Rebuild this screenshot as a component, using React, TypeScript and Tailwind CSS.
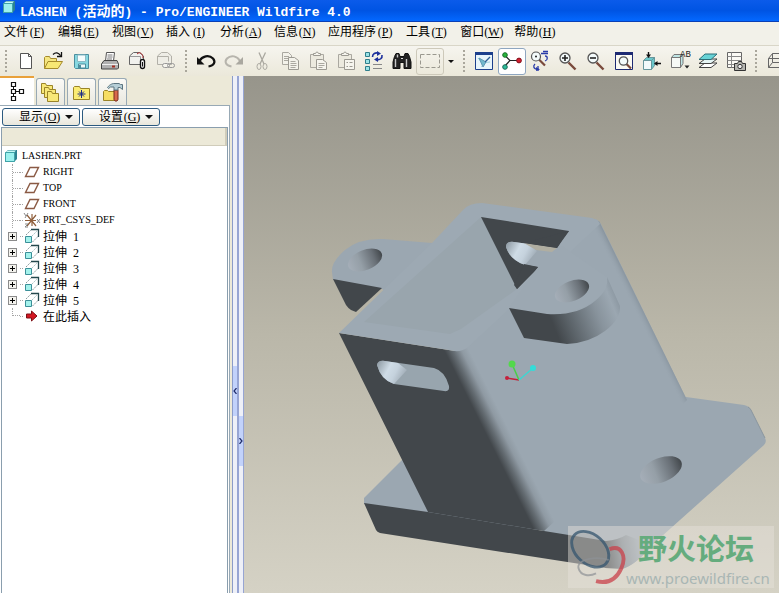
import { ReactNode } from "react";

type Tool = {
  label: string;
  icon: ReactNode;
  boxed?: "active" | "flat";
};

type MenuEntry = {
  label: string;
  hotkey: string;
};

const menus: MenuEntry[] = [
  { label: "文件", hotkey: "F" },
  { label: "编辑", hotkey: "E" },
  { label: "视图", hotkey: "V" },
  { label: "插入", hotkey: "I" },
  { label: "分析", hotkey: "A" },
  { label: "信息", hotkey: "N" },
  { label: "应用程序", hotkey: "P" },
  { label: "工具", hotkey: "T" },
  { label: "窗口", hotkey: "W" },
  { label: "帮助", hotkey: "H" },
];

const Icon = ({ children }: { children: ReactNode }) => (
  <svg
    viewBox="0 0 22 22"
    className="h-[22px] w-[22px] shrink-0"
    fill="none"
    stroke="#444"
    strokeWidth="1"
    aria-hidden="true"
  >
    {children}
  </svg>
);

const Lens = ({ children }: { children?: ReactNode }) => (
  <>
    <path d="M11.5 12.5 18.5 19.5" stroke="#7a4a3c" strokeWidth="2.4" />
    <circle cx="8" cy="8" r="5" fill="#f4fbfb" stroke="#555" strokeWidth="1.3" />
    {children}
  </>
);

/* ---------- toolbar groups ---------- */

const fileTools: Tool[] = [
  {
    label: "新建",
    icon: (
      <Icon>
        <path d="M5.5 3.5h8l3 3v12h-11z" fill="#fff" stroke="#555" />
        <path d="M13.5 3.5v3h3" stroke="#555" />
      </Icon>
    ),
  },
  {
    label: "打开",
    icon: (
      <Icon>
        <path d="M1.5 18.5v-11l1-1h4l1 2h6v4" fill="#f5e680" stroke="#a58a2c" />
        <path d="M1.5 18.5 5 11.5h14.5L15 18.5z" fill="#f7e774" stroke="#a58a2c" />
        <path d="M10 4.5c2.500-2.500 5.500-2 7.500 1M18.500 2v4.500H14" stroke="#111" strokeWidth="1.3" />
      </Icon>
    ),
  },
  {
    label: "保存",
    icon: (
      <Icon>
        <path d="M3.500 4.500h14v14h-13l-1-1z" fill="#86d8e0" stroke="#4b8e9e" />
        <path d="M6.500 5v6.500h8V5z" fill="#f5fdfd" stroke="#8bb9c4" />
        <path d="M7.500 18v-4h7v4z" fill="#eefafa" stroke="#4b8e9e" />
        <path d="M9 15v3" stroke="#4b8e9e" strokeWidth="2" />
      </Icon>
    ),
  },
  {
    label: "打印",
    icon: (
      <Icon>
        <path d="M6.500 11 7.500 2.500h8l-1 8.500z" fill="#fff" stroke="#555" />
        <path d="M8.500 5h5M8.500 7h5M8 9h5" stroke="#777" />
        <path d="M2.500 14 5 10.500h13l1.500 3.500v4l-1 1h-16z" fill="#b0b0b0" stroke="#444" />
        <path d="M3 14.500h16" stroke="#eee" />
        <path d="M13 16.500h3" stroke="#a22c20" strokeWidth="2" />
      </Icon>
    ),
  },
  {
    label: "电子邮件",
    icon: (
      <Icon>
        <path d="M2.500 14.500V6l4-3.500h6l4 3.500v8.500z" fill="#f1f1ee" stroke="#666" />
        <path d="M2.500 6.500h11v8" stroke="#999" />
        <path d="M10 4c3-3 6 0 6 4" stroke="#b03030" />
        <rect x="13.500" y="9.500" width="4" height="9" rx="2" fill="#fff" stroke="#111" strokeWidth="1.400" />
        <path d="M15.500 12v4.500" stroke="#111" />
      </Icon>
    ),
  },
  {
    label: "电子邮件链接",
    icon: (
      <Icon>
        <path d="M2.500 14.500V6l4-3.500h6l4 3.500v8.500z" fill="#eeede6" stroke="#b2b0a8" />
        <path d="M2.500 6.500h11v5" stroke="#b2b0a8" />
        <rect x="7.500" y="13.500" width="7" height="4" rx="2" fill="#f5f4ee" stroke="#999" />
        <rect x="12.500" y="13.500" width="7" height="4" rx="2" stroke="#999" />
      </Icon>
    ),
  },
];

const editTools: Tool[] = [
  {
    label: "撤消",
    icon: (
      <Icon>
        <path d="M4.500 11C7 6 14 4.500 18 8.500c3 3.500 1 7-4.500 8" stroke="#111" strokeWidth="2.200" />
        <path d="M2 7v7.500h7.500z" fill="#111" stroke="none" />
      </Icon>
    ),
  },
  {
    label: "重做",
    icon: (
      <Icon>
        <path d="M17 11C14.500 6 8 4.500 4 8.500c-3 3.500-1 7 4.500 8" stroke="#b7b5ad" strokeWidth="2" />
        <path d="M20 7v7.500h-7.500z" fill="#aaa8a0" stroke="none" />
      </Icon>
    ),
  },
  {
    label: "剪切",
    icon: (
      <Icon>
        <path d="M8 2.500 13 14M14.500 2.500 9 14" stroke="#aaa8a0" strokeWidth="1.300" />
        <ellipse cx="8" cy="16.500" rx="2" ry="3" stroke="#aaa8a0" />
        <ellipse cx="14" cy="16.500" rx="2" ry="3" stroke="#aaa8a0" />
      </Icon>
    ),
  },
  {
    label: "复制",
    icon: (
      <Icon>
        <path d="M3.500 2.500h6l3 3v9h-9z" fill="#f3f2ea" stroke="#aaa8a0" />
        <path d="M5 6.500h5M5 8.500h4M5 10.500h4" stroke="#aaa8a0" />
        <path d="M9.500 7.500h6l4 3v9h-10z" fill="#f3f2ea" stroke="#9c9a92" />
        <path d="M11.500 11.500h5M11.500 13.500h6M11.500 15.500h6M11.500 17.500h5" stroke="#aaa8a0" />
      </Icon>
    ),
  },
  {
    label: "粘贴",
    icon: (
      <Icon>
        <path d="M3.500 4.500h13v13h-13z" fill="#eceadf" stroke="#aaa8a0" />
        <path d="M6.500 5.500v-2h2l1-1.500h1l1 1.500h2v2z" fill="#f6f5ee" stroke="#9c9a92" />
        <path d="M9.500 9.500h6l4 3v7h-10z" fill="#f6f5ee" stroke="#9c9a92" />
        <path d="M11.500 13.500h6M11.500 15.500h6M11.500 17.500h4" stroke="#aaa8a0" />
      </Icon>
    ),
  },
  {
    label: "选择性粘贴",
    icon: (
      <Icon>
        <path d="M3.500 4.500h13v13h-13z" fill="#eceadf" stroke="#aaa8a0" />
        <path d="M6.500 5.500v-2h2l1-1.500h1l1 1.500h2v2z" fill="#f6f5ee" stroke="#9c9a92" />
        <path d="M9.500 9.500h10v10h-10z" fill="#f6f5ee" stroke="#9c9a92" />
        <path d="M11.500 12.500h1.500M11.500 16.500h1.500M14.500 12.500h3M14.500 16.500h3" stroke="#9c9a92" />
      </Icon>
    ),
  },
  {
    label: "再生",
    icon: (
      <Icon>
        <path d="M2.500 2.500h4v4h-4zM2.500 9.500h4v4h-4zM2.500 16.500h4v4h-4z" fill="#9be3e6" stroke="#2f7e8b" />
        <path d="M9.500 7c0-3.500 3-4.500 5.500-4M19 5c.500 3.500-2 5-5 4.500" stroke="#1c2f9c" strokeWidth="1.600" />
        <path d="M14 1l4 2.500L14 6zM15 7v5l-4-2.500z" fill="#1c2f9c" stroke="none" />
        <path d="M10 14.500h9M10 18.500h9" stroke="#888" />
      </Icon>
    ),
  },
  {
    label: "查找",
    icon: (
      <Icon>
        <path d="M3.500 6.500 5 3.500h3l1 3h4l1-3h3l1.500 3L20 12v6.500h-7v-6h-4v6H2V12z" fill="#222" stroke="#111" />
        <path d="M4.500 9v8M15.500 9v8M6.500 4.500v3" stroke="#c8c8c8" strokeWidth="1.400" />
        <path d="M10 8.500h2" stroke="#ddd" />
      </Icon>
    ),
  },
  {
    label: "选取框",
    boxed: "flat",
    icon: (
      <Icon>
        <path d="M1.500 4.500h19v13h-19z" stroke="#9a988f" strokeDasharray="4 2" />
      </Icon>
    ),
  },
];

const viewTools: Tool[] = [
  {
    label: "重画",
    icon: (
      <Icon>
        <path d="M2.500 2.500h17v17h-17z" fill="#e8f5fb" stroke="#1c3f8c" />
        <path d="M2 3.500h18" stroke="#1c3f8c" strokeWidth="3" />
        <path d="M5 8c3 4 6 5 12 4M8 17c2-2 4-4 9-10" stroke="#9fd0de" />
        <path d="m6 8 7 4-3 5z" fill="#71b8cc" stroke="#5f9ab4" />
        <path d="m12 12 5-5" stroke="#2f5e93" strokeWidth="1.300" />
      </Icon>
    ),
  },
  {
    label: "旋转中心",
    boxed: "active",
    icon: (
      <Icon>
        <path d="M3.500 5 9 10.500 3.500 16.500M9 10.500h8" stroke="#222" strokeWidth="1.200" />
        <circle cx="4" cy="5" r="2.300" fill="#27b53c" stroke="#176d27" />
        <circle cx="4" cy="17" r="2.300" fill="#2ebd9b" stroke="#176d57" />
        <circle cx="18" cy="10.500" r="2.400" fill="#d31e2f" stroke="#82101c" />
      </Icon>
    ),
  },
  {
    label: "定向模式",
    icon: (
      <Icon>
        <path d="m10 9.500 6 6" stroke="#7a4a3c" strokeWidth="2.200" />
        <circle cx="7" cy="6.500" r="4.500" fill="#f4fbfb" stroke="#555" strokeWidth="1.200" />
        <circle cx="7" cy="6.500" r="1" fill="#222" stroke="none" />
        <path d="M12 3.500h7M14 1.500h5M16 6c3 0 3 4 0 5M6 14c-2 2-2 5 3 5.500M9 16v5" stroke="#2a3ba8" strokeWidth="1.300" />
        <path d="m7 17 4 2.500-4 1.500z" fill="#2a3ba8" stroke="none" />
      </Icon>
    ),
  },
  {
    label: "放大",
    icon: (
      <Icon>
        <Lens>
          <path d="M5 8h6M8 5v6" stroke="#222" strokeWidth="1.600" />
        </Lens>
      </Icon>
    ),
  },
  {
    label: "缩小",
    icon: (
      <Icon>
        <Lens>
          <path d="M5 8h6" stroke="#222" strokeWidth="1.600" />
        </Lens>
      </Icon>
    ),
  },
  {
    label: "重新调整",
    icon: (
      <Icon>
        <path d="M2.500 2.500h17v17h-17z" fill="#fbfaf3" stroke="#1d2a72" />
        <path d="M2 3.500h18" stroke="#1d2a72" strokeWidth="3" />
        <path d="m13 13.500 5 5" stroke="#7a4a3c" strokeWidth="2.200" />
        <circle cx="10.500" cy="11" r="4.200" fill="#f4fbfb" stroke="#555" strokeWidth="1.300" />
      </Icon>
    ),
  },
  {
    label: "重定向视图",
    icon: (
      <Icon>
        <path d="M2.500 10.500h8v9h-8z" fill="#f2fafa" stroke="#67979c" />
        <path d="m2.500 10.500 3-3h8l-3 3zM10.500 10.500l3-3v8l-3 4z" fill="#6bc8cb" stroke="#67979c" />
        <path d="M7.500 2v4M14 13.500h6" stroke="#111" strokeWidth="1.400" />
        <path d="M5 4.500h5l-2.500 3.500zM16.500 11v5L13 13.500z" fill="#111" stroke="none" />
      </Icon>
    ),
  },
  {
    label: "保存的视图列表",
    icon: (
      <Icon>
        <path d="M2.500 7.500h9v10h-9z" fill="#f6f9f6" stroke="#777" />
        <path d="m2.500 7.500 2.500-3h9l-2.500 3zM11.500 7.500l2.500-3v9l-2.500 4z" fill="#bfe5e5" stroke="#777" />
        <text x="11" y="7" fill="#222" stroke="none" fontFamily="Liberation Mono" fontSize="9">
          AB
        </text>
        <path d="M15.500 15.500h5L18 18.500z" fill="#222" stroke="none" />
      </Icon>
    ),
  },
  {
    label: "图层",
    icon: (
      <Icon>
        <path d="M2 17.500 8 13h12l-6 4.500z" fill="#fff" stroke="#444" />
        <path d="M2 13.500 8 9h12l-6 4.500z" fill="#e6f5f5" stroke="#444" />
        <path d="M2 9.500 8 4h12l-6 5.500z" fill="#68d3d6" stroke="#2b6f78" />
      </Icon>
    ),
  },
  {
    label: "视图管理器",
    icon: (
      <Icon>
        <path d="M2.500 2.500h14v15h-14z" fill="#fbfaf5" stroke="#666" />
        <path d="M2.500 6.500h14M2.500 10.500h14M2.500 14.500h14M6.500 2.500v15" stroke="#888" />
        <path d="M9.500 13.500h3l1-2h3l1 2h3v7h-11z" fill="#b5b5b0" stroke="#333" />
        <circle cx="15" cy="16.500" r="2.200" fill="#eee" stroke="#333" />
      </Icon>
    ),
  },
];

const displayTools: Tool[] = [
  {
    label: "线框",
    icon: (
      <Icon>
        <path d="M3.500 8.500h11v9h-11zM3.500 8.500l4-5h11v9l-4 5M14.500 8.500l4-5M7.500 3.500v9h11M3.500 17.500l4-5" stroke="#666" />
      </Icon>
    ),
  },
];

const Separator = () => (
  <div className="flex w-3 shrink-0 justify-center">
    <div className="h-[22px] border-l-2 border-dotted border-[#aaa79c]" />
  </div>
);

const ToolGroup = ({ tools }: { tools: Tool[] }) => (
  <div className="flex shrink-0">
    {tools.map((tool) => (
      <button
        key={tool.label}
        aria-label={tool.label}
        className={
          tool.boxed === "active"
            ? "flex h-[27px] w-7 items-center justify-center rounded-[3px] border border-[#8ea6c0] bg-white"
            : tool.boxed === "flat"
              ? "flex h-[27px] w-7 items-center justify-center rounded-[3px] border border-[#cdc9ba]"
              : "flex h-[27px] w-7 items-center justify-center"
        }
      >
        {tool.icon}
      </button>
    ))}
  </div>
);

const Hotkey = ({ letter }: { letter: string }) => (
  <span className="inline-block w-[18px] text-center font-['Liberation_Serif',serif]">
    (<u>{letter}</u>)
  </span>
);

const Caret = () => (
  <svg viewBox="0 0 8 4" className="h-1 w-2" aria-hidden="true">
    <path d="M0 0h8L4 4z" fill="#111" />
  </svg>
);

/* ---------- model tree ---------- */

const PartIcon = () => (
  <svg viewBox="0 0 14 14" className="h-[14px] w-[14px] shrink-0" aria-hidden="true">
    <path d="M1 4 4 1h9v9l-3 3H1z" fill="#2c8290" />
    <path d="M1.500 3.500h9v9h-9z" fill="#9cf1ee" stroke="#3fa3a8" />
    <path d="m2 3 2-1.500h8L10.500 3z" fill="#c6fbf7" />
  </svg>
);

const PlaneIcon = () => (
  <svg viewBox="0 0 16 12" className="h-3 w-4" fill="none" aria-hidden="true">
    <path d="M1.500 10.500 6 1.500h8.500L10 10.500z" stroke="#8a5a44" strokeWidth="1.400" />
  </svg>
);

const CsysIcon = () => (
  <svg viewBox="0 0 18 16" className="h-4 w-[18px]" fill="none" aria-hidden="true">
    <path d="M9 2v12M2 8.500h11M4 3l9 11M13 3 4 14" stroke="#8f5f3c" strokeWidth="1.200" />
    <path d="m1 1 2 3M5 1 2 6M14 7l3 4M17 7l-3 4M2 12h3l-3 3h3" stroke="#888" />
  </svg>
);

const ExtrudeIcon = () => (
  <svg viewBox="0 0 16 16" className="h-4 w-4" fill="none" aria-hidden="true">
    <path d="M1.500 8.500h6v6h-6z" fill="#a4f2ec" stroke="#3b8f98" />
    <path d="m2 7 5-5M8.500 14l6-6" stroke="#8a9a9c" strokeDasharray="2 1" />
    <path d="M8 8 13 3" stroke="#a9c4c6" strokeDasharray="2 1" />
    <path d="M7 1.500h7.500V9" stroke="#24484d" strokeWidth="1.300" />
  </svg>
);

const InsertIcon = () => (
  <svg viewBox="0 0 14 12" className="h-3 w-[14px]" aria-hidden="true">
    <path d="M1.500 4h5V1L12 6l-5.500 5V8h-5z" fill="#d31722" stroke="#7c1016" />
  </svg>
);

type Node = {
  icon: ReactNode;
  latin?: string;
  name?: string;
  index?: number;
};

const nodes: Node[] = [
  { icon: <PlaneIcon />, latin: "RIGHT" },
  { icon: <PlaneIcon />, latin: "TOP" },
  { icon: <PlaneIcon />, latin: "FRONT" },
  { icon: <CsysIcon />, latin: "PRT_CSYS_DEF" },
  { icon: <ExtrudeIcon />, name: "拉伸", index: 1 },
  { icon: <ExtrudeIcon />, name: "拉伸", index: 2 },
  { icon: <ExtrudeIcon />, name: "拉伸", index: 3 },
  { icon: <ExtrudeIcon />, name: "拉伸", index: 4 },
  { icon: <ExtrudeIcon />, name: "拉伸", index: 5 },
  { icon: <InsertIcon />, name: "在此插入" },
];

const Branch = ({ node, last }: { node: Node; last: boolean }) => (
  <li className="flex h-4 items-center whitespace-nowrap">
    <div className="flex h-4 w-4 shrink-0 items-center">
      {node.index ? (
        <button
          aria-label={`展开 ${node.name} ${node.index}`}
          className="ml-1 flex h-[9px] w-[9px] items-center justify-center border border-[#8b8b8b] bg-[#f4f3ee]"
        >
          <svg viewBox="0 0 5 5" className="h-[5px] w-[5px] shrink-0" aria-hidden="true">
            <path d="M0 2h5v1H0zM2 0h1v5H2z" fill="#000" />
          </svg>
        </button>
      ) : (
        <div
          className={
            last
              ? "ml-2 h-2 w-2 self-start border-b border-l border-dotted border-[#a5a5a5]"
              : "ml-2 flex h-4 w-2 items-center border-l border-dotted border-[#a5a5a5]"
          }
        >
          {!last && <div className="w-full border-t border-dotted border-[#a5a5a5]" />}
        </div>
      )}
    </div>
    <div className="w-[3px] shrink-0 border-t border-dotted border-[#a5a5a5]" />
    <div className="flex w-[18px] shrink-0 items-center justify-center">{node.icon}</div>
    {node.latin ? (
      <span className="pl-0.5 font-['Liberation_Serif',serif] text-[10px] leading-4">{node.latin}</span>
    ) : (
      <span className="pl-0.5 text-xs leading-4">
        {node.name}
        {node.index && (
          <span className="pl-1.5 font-['Liberation_Serif',serif]">{node.index}</span>
        )}
      </span>
    )}
  </li>
);

const Folder = ({ x, y }: { x: number; y: number }) => (
  <path
    d={`M${x} ${y}h4l1 2h6v8h-11z`}
    fill="#f8e878"
    stroke="#9a8428"
  />
);

const tabs: Tool[] = [
  {
    label: "模型树",
    icon: (
      <Icon>
        <path d="M5.500 1.500h4v4h-4zM5.500 8.500h4v4h-4zM5.500 15.500h4v4h-4zM13.500 8.500h4v4h-4z" fill="#fff" stroke="#111" strokeWidth="1.200" />
        <path d="M7.500 5.500v3M7.500 12.500v3M9.500 10.500h4" stroke="#111" />
      </Icon>
    ),
  },
  {
    label: "文件夹浏览器",
    icon: (
      <Icon>
        <Folder x={1.5} y={2.5} />
        <Folder x={4.5} y={6.5} />
        <Folder x={7.5} y={10.5} />
      </Icon>
    ),
  },
  {
    label: "收藏夹",
    icon: (
      <Icon>
        <path d="M2.500 18.500v-12l1-1h5l1 2h9v11z" fill="#fbec74" stroke="#9a8428" />
        <path d="M10.500 9v8M6.500 13h8M8 10.500l5 5M13 10.500l-5 5" stroke="#1c2c86" />
      </Icon>
    ),
  },
  {
    label: "连接",
    icon: (
      <Icon>
        <path d="M1.500 19.500v-9l1-1h3l1 1h6v9z" fill="#f6dd63" stroke="#9a8428" />
        <path d="M12 9h4v9.500l-1 1.500h-2l-1-1.500z" fill="#d8694c" stroke="#7a2c1c" />
        <path d="M5.500 6.500C8 3 11 2.500 12 2.500h5l1.500 1h2v5l-2.500-2h-2V9h-4V6H8.500L6.500 7.500z" fill="#b6ced6" stroke="#5c7580" />
      </Icon>
    ),
  },
];

const PanelButton = ({ label, letter }: { label: string; letter: string }) => (
  <button className="flex h-[18px] w-[78px] items-center justify-end gap-1 rounded-[3px] border border-[#2c5a80] bg-linear-to-b from-white to-[#e9e7dc] pr-1.5 text-xs leading-4">
    <span>
      {label}
      <Hotkey letter={letter} />
    </span>
    <Caret />
  </button>
);

const Navigator = () => (
  <aside className="flex w-[232px] shrink-0 flex-col bg-[#ece9d8]">
    <div className="flex h-[29px] shrink-0 items-end gap-0.5" role="tablist">
      {tabs.map((tab, i) => (
        <button
          key={tab.label}
          role="tab"
          aria-selected={i === 0}
          aria-label={tab.label}
          className={
            i === 0
              ? "flex h-[29px] w-[34px] items-center justify-center border-t-2 border-[#e9a13b] bg-white"
              : "flex h-[27px] w-[29px] items-center justify-center rounded-t-[3px] border border-b-0 border-[#98a9b5] bg-linear-to-b from-[#fbfaf7] to-[#e9e8df]"
          }
        >
          {tab.icon}
        </button>
      ))}
    </div>
    <div className="mr-0.5 flex flex-1 flex-col border-r border-t border-[#98a9b5] bg-white pl-px">
      <div className="flex h-[21px] shrink-0 items-center gap-0.5 pl-px">
        <PanelButton label="显示" letter="O" />
        <PanelButton label="设置" letter="G" />
      </div>
      <div className="mr-px flex flex-1 flex-col border-x border-t border-[#8a9eae]">
        <div className="h-[18px] shrink-0 border-b border-r-2 border-[#d0ccba] bg-[#ece9d8]" />
        <div className="flex flex-col bg-white pl-0.5 pt-0.5">
          <div className="flex h-4 items-center gap-1 font-['Liberation_Serif',serif] text-[10px] leading-4">
            <PartIcon />
            LASHEN.PRT
          </div>
          <ul>
            {nodes.map((node, i) => (
              <Branch key={i} node={node} last={i === nodes.length - 1} />
            ))}
          </ul>
        </div>
      </div>
    </div>
  </aside>
);

const Splitters = () => (
  <div className="flex w-3 shrink-0 border-l border-[#8b9cc9]">
    <div className="flex flex-1 flex-col border-r-2 border-[#97a5d3] bg-[#eef0f8] pt-[290px]">
      <button aria-label="收起导航器" className="flex h-[50px] items-center justify-center bg-[#c2d2fb]">
        <svg viewBox="0 0 4 6" className="h-1.5 w-1" fill="none" aria-hidden="true">
          <path d="M3.500 0 1 3l2.500 3" stroke="#1f2c6b" strokeWidth="1.200" />
        </svg>
      </button>
    </div>
    <div className="flex flex-1 flex-col border-r border-[#97a5d3] bg-[#eef0f8] pt-[340px]">
      <button aria-label="展开浏览器" className="flex h-[50px] items-center justify-center bg-[#c2d2fb]">
        <svg viewBox="0 0 4 6" className="h-1.5 w-1" fill="none" aria-hidden="true">
          <path d="M.500 0 3 3 .500 6" stroke="#1f2c6b" strokeWidth="1.200" />
        </svg>
      </button>
    </div>
  </div>
);

/* ---------- shaded part ---------- */

const Model = () => (
  <svg
    viewBox="244 76 535 517"
    className="h-full w-full"
    role="img"
    aria-label="LASHEN.PRT"
  >
    <defs>
      <linearGradient id="column" gradientUnits="userSpaceOnUse" x1="484" y1="430" x2="504" y2="420">
        <stop offset="0" stopColor="#42474b" />
        <stop offset="0.35" stopColor="#666e74" />
        <stop offset="0.7" stopColor="#8f9aa3" />
        <stop offset="1" stopColor="#9ba7b1" />
      </linearGradient>
      <linearGradient id="edge" gradientUnits="userSpaceOnUse" x1="636" y1="314" x2="644" y2="310">
        <stop offset="0" stopColor="#9ba7b1" stopOpacity="0" />
        <stop offset="1" stopColor="#85919b" />
      </linearGradient>
      <linearGradient id="lug" gradientUnits="userSpaceOnUse" x1="552" y1="322" x2="616" y2="296">
        <stop offset="0" stopColor="#42474b" />
        <stop offset="0.25" stopColor="#5d656b" />
        <stop offset="0.65" stopColor="#88939c" />
        <stop offset="0.9" stopColor="#9ba7b1" />
        <stop offset="1" stopColor="#8d99a3" />
      </linearGradient>
      <linearGradient id="hole">
        <stop offset="0" stopColor="#a5aeb8" />
        <stop offset="0.35" stopColor="#959fa7" />
        <stop offset="0.75" stopColor="#697077" />
        <stop offset="1" stopColor="#42474b" />
      </linearGradient>
      <linearGradient id="slot" x1="0" y1="0" x2="1" y2="0.4">
        <stop offset="0" stopColor="#8a969f" />
        <stop offset="0.45" stopColor="#cfdce6" />
        <stop offset="0.7" stopColor="#c5d2dd" />
        <stop offset="1" stopColor="#a3afb9" />
      </linearGradient>
      <linearGradient id="corner" gradientUnits="userSpaceOnUse" x1="606" y1="550" x2="640" y2="545">
        <stop offset="0" stopColor="#42474b" />
        <stop offset="0.5" stopColor="#7d8790" />
        <stop offset="1" stopColor="#9ba7b1" />
      </linearGradient>
    </defs>

    {/* base plate */}
    <path d="M364 498 402 460 450 460 560 531 440 525 364 504z" fill="#9ba7b1" />
    <path d="M686 397 744 405Q749 406 751 410L765 438Q767 442 764 445L652 545Q636 565 622 569L560 545 540 529 600 440z" fill="#9ba7b1" />
    <path d="M748 407Q750 408 751 410L765 438" fill="none" stroke="#8a969f" />
    <path d="M364 503 428 512 544 531 606 541V568L380 533Q377 532 376 530z" fill="#42474b" />
    <path d="M606 541Q618 540 626 535L652 545Q636 565 622 569L605 568z" fill="url(#corner)" />

    {/* left lug */}
    <path d="M332 272Q331 262 345 250T383 239L432 243 460 250 400 300 382 289 333 280z" fill="#9ba7b1" />
    <path d="M333 279 382 288 356 312 351 310Q348 308 346 305z" fill="#42474b" />
    <ellipse cx="365" cy="260" rx="18" ry="10" transform="rotate(-22 365 260)" fill="url(#hole)" />

    {/* column */}
    <path d="M339 333 455 351 595 219Q599 220 601 224L688 402 544 531 428 512z" fill="url(#column)" />
    <path d="M592 225 599 221 687 400 680 407z" fill="url(#edge)" />

    {/* top rim */}
    <path d="M339 333 432 243 463 210Q469 203 482 203L592 218Q599 220 600 224L467 348Q460 353 449 350z" fill="#9da9b3" />
    <path d="M481 217 517 289 461 329 450 334 364 322z" fill="#99a5ad" />
    <path d="M481 217 517 289 539 267 557 248 569 231z" fill="#42474b" />
    <path d="M506 247Q506 241 514 242L557 248 562 249 541 270 538 267 525 265Q510 260 506 247z" fill="#9ca8b2" />
    <path d="M506 247Q506 241 514 242L529 244 537 251 525 265Q510 260 506 247z" fill="url(#slot)" />
    <path d="M524 243 557 248 552 252 536 250z" fill="#b0aea1" />

    {/* right lug */}
    <path d="M509 308 538 267 562 246 607 277Q611 290 593 302T547 314z" fill="#9ca8b2" />
    <path d="M524 243 557 248 562 240 569 231z" fill="#42474b" />
    <path d="M514 285 517 289 538 267 524 264z" fill="#42474b" />
    <path d="M509 308 547 314Q577 316 595 301 609 290 607 277L620 306Q621 319 605 331T567 344L524 338z" fill="url(#lug)" />
    <ellipse cx="572" cy="291" rx="18" ry="10" transform="rotate(-22 572 291)" fill="url(#hole)" />

    {/* front slot */}
    <path d="M377 365Q378 360 385 361L434 368Q445 371 449 386 450 392 444 391L394 384Q381 380 377 365z" fill="#98a5ae" />
    <path d="M377 365Q378 360 385 361L398 363 407 370 394 384Q381 380 377 365z" fill="url(#slot)" />

    <ellipse cx="661" cy="470" rx="22" ry="12" transform="rotate(-22 661 470)" fill="url(#hole)" />

    {/* spin center */}
    <path d="M519 380 507 378" stroke="#c4203c" strokeWidth="1.500" />
    <path d="M519 380 512 364" stroke="#48cf48" strokeWidth="1.500" />
    <path d="M519 380 533 368" stroke="#3cd6d2" strokeWidth="1.500" />
    <circle cx="507" cy="378" r="2" fill="#c4203c" />
    <circle cx="512" cy="364" r="3.500" fill="#53d84c" />
    <circle cx="533" cy="368" r="3" fill="#34dcd8" />
  </svg>
);

const Watermark = () => (
  <div className="absolute bottom-[5px] right-[5px] flex h-[62px] w-[206px] bg-[#e6e3dc]/45">
    <svg viewBox="0 0 60 62" className="h-[62px] w-[58px] shrink-0" fill="none" aria-hidden="true">
      <ellipse cx="23" cy="23" rx="22" ry="15" transform="rotate(42 23 23)" fill="#777" fillOpacity="0.150" stroke="#35566f" strokeOpacity="0.750" strokeWidth="3" />
      <path d="M43 23c12-5 18 7 12 20-5 11-14 16-26 13" stroke="#c9404a" strokeOpacity="0.750" strokeWidth="4" />
      <path d="M42 34C30 30 8 33 11 43c2 8 12 8 18 5" stroke="#8d9295" strokeOpacity="0.700" strokeWidth="2" />
    </svg>
    <div className="flex flex-col whitespace-nowrap">
      <span className="pl-3 text-[29px] font-bold leading-[42px] text-[#65ac7e]">野火论坛</span>
      <span className="font-['Noto_Sans',sans-serif] text-[15px] leading-5 text-[#a9b6b4]">
        www.proewildfire.cn
      </span>
    </div>
  </div>
);

const App = () => {
  return (
    <div className="flex h-screen flex-col overflow-hidden bg-[#ece9d8] font-['Noto_Sans_CJK_SC',sans-serif] text-xs text-black">
      <header className="flex h-[22px] shrink-0 items-start gap-1 border-b border-[#0a3fb5] bg-linear-to-b from-[#0b5bea] via-[#0054e3] to-[#0468ff] pl-0.5">
        <PartIcon />
        <h1 className="whitespace-pre font-['Liberation_Mono',monospace] text-[13px] font-bold leading-[18px] text-white">
          LASHEN (
          <span className="font-['Noto_Sans_CJK_SC',sans-serif] text-sm">活动的</span>
          ) - Pro/ENGINEER Wildfire 4.0
        </h1>
      </header>

      <nav className="flex h-[23px] shrink-0 items-center gap-3 bg-[#f2f1e9] pb-1 pl-1">
        {menus.map((menu) => (
          <button key={menu.hotkey} className="whitespace-nowrap leading-4">
            {menu.label}
            <Hotkey letter={menu.hotkey} />
          </button>
        ))}
      </nav>

      <div className="flex h-[31px] shrink-0 items-center overflow-hidden border-t border-[#d9d6c8] bg-linear-to-b from-[#f6f5ef] to-[#ebe8da]">
        <Separator />
        <ToolGroup tools={fileTools} />
        <Separator />
        <ToolGroup tools={editTools} />
        <button aria-label="选取选项" className="flex w-[14px] shrink-0 justify-center">
          <svg viewBox="0 0 6 3" className="h-[3px] w-1.5" aria-hidden="true">
            <path d="M0 0h6L3 3z" fill="#111" />
          </svg>
        </button>
        <Separator />
        <ToolGroup tools={viewTools} />
        <Separator />
        <ToolGroup tools={displayTools} />
      </div>

      <div className="flex min-h-0 flex-1">
        <Navigator />
        <Splitters />
        <main className="relative min-w-0 flex-1 bg-linear-to-b from-[#97958b] via-[#bab7a9] to-[#d5d2c5]">
          <Model />
          <Watermark />
        </main>
      </div>
    </div>
  );
};

export default App;
